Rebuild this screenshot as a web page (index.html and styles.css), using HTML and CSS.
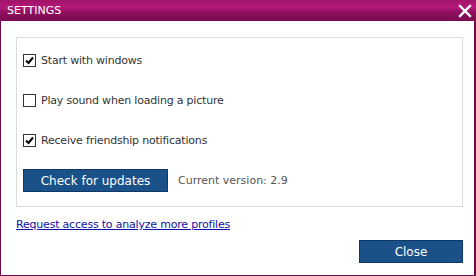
FILE: index.html
```html
<!DOCTYPE html>
<html>
<head>
  <link rel="stylesheet" href="styles.css">
</head>
<body>
  <div class="window">
    <div class="titlebar">
      <span class="title">SETTINGS</span>
      <svg class="close-x" width="14" height="14" viewBox="0 0 14 14">
        <path d="M2 2 L12 12 M12 2 L2 12" stroke="#fff" stroke-width="2.4" stroke-linecap="square"/>
      </svg>
    </div>
    <div class="content">
      <div class="group">
        <label class="option">
          <span class="box checked">
            <svg width="11" height="11" viewBox="0 0 11 11"><path d="M2 5.5 L4.5 8 L9 2.5" stroke="#000" stroke-width="2" fill="none"/></svg>
          </span>
          Start with windows
        </label>
        <label class="option">
          <span class="box"></span>
          Play sound when loading a picture
        </label>
        <label class="option">
          <span class="box checked">
            <svg width="11" height="11" viewBox="0 0 11 11"><path d="M2 5.5 L4.5 8 L9 2.5" stroke="#000" stroke-width="2" fill="none"/></svg>
          </span>
          Receive friendship notifications
        </label>
        <div class="update-row">
          <button class="btn check-btn">Check for updates</button>
          <span class="version">Current version: 2.9</span>
        </div>
      </div>
      <a class="request" href="#">Request access to analyze more profiles</a>
      <div class="footer">
        <button class="btn close-btn">Close</button>
      </div>
    </div>
  </div>
</body>
</html>
```

FILE: styles.css
```css
body {
  margin: 0;
  background-color: #fff;
  font-family: "DejaVu Sans", sans-serif;
  font-size: 11px;
  letter-spacing: -0.2px;
}

.window {
  width: 476px;
  height: 276px;
  box-sizing: border-box;
  border: 1px solid #6e0b4c;
  border-top: none;
  border-right-width: 2px;
  display: flex;
  flex-direction: column;
}

.titlebar {
  height: 21px;
  margin: 0 -2px 0 -1px;
  background: linear-gradient(to bottom, #a2146a 0%, #b3187a 35%, #8e0f5e 60%, #7a0a50 100%);
  display: flex;
  align-items: center;
  justify-content: space-between;
  padding: 0 4px 0 7px;
}

.title {
  color: #fff;
  font-size: 11px;
  letter-spacing: 0;
}

.content {
  flex: 1;
  padding: 16px 11px 0 15px;
  display: flex;
  flex-direction: column;
}

.group {
  border: 1px solid #dcdcdc;
  padding: 15px 6px 14px 6px;
}

.option {
  display: flex;
  align-items: center;
  gap: 5px;
  height: 14px;
  color: #333;
  margin-bottom: 26px;
}

.box {
  width: 11px;
  height: 11px;
  border: 1px solid #333;
  background: #fff;
  display: flex;
  flex-shrink: 0;
}

.update-row {
  display: flex;
  align-items: center;
  gap: 10px;
  margin-top: -4px;
}

.btn {
  background-color: #1a5189;
  color: #fff;
  border: 1px solid #0e3866;
  font-family: "DejaVu Sans", sans-serif;
  font-size: 12px;
  padding: 0;
  height: 23px;
  cursor: pointer;
}

.check-btn {
  width: 145px;
}

.version {
  color: #555;
  letter-spacing: 0;
}

.request {
  color: #1010a8;
  margin-top: 11px;
}

.footer {
  display: flex;
  justify-content: flex-end;
  margin-top: 9px;
}

.close-btn {
  width: 104px;
}
```
